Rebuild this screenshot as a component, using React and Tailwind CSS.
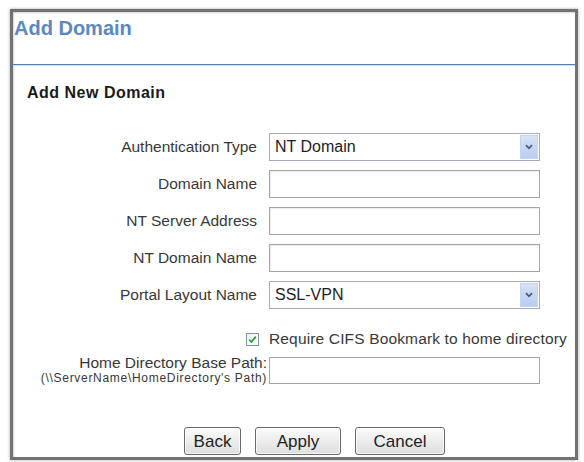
import React from 'react';

const font = { fontFamily: '"Liberation Sans", Arial, sans-serif' };

// Classic gray text box
const TextBox = () => (
  <div className="w-[271px] h-[28px] border border-[#a6a6a6] bg-white shadow-[inset_1px_1px_1px_rgba(0,0,0,0.08)]" />
);

// Dropdown with the light-blue arrow button on the right
const SelectBox = ({ value }) => (
  <div className="w-[271px] h-[28px] border border-[#a5acb5] bg-white flex items-center justify-between pl-[5px] pr-[1px]">
    <span className="text-[16px] leading-none text-[#1e1e1e]">{value}</span>
    <div className="w-[18px] h-[24px] bg-gradient-to-b from-[#d7e3f5] to-[#b9cdee] border border-[#c6d5ee] flex items-center justify-center">
      <svg width="8" height="6" viewBox="0 0 8 6">
        <path d="M1 1.2 L4 4.3 L7 1.2" fill="none" stroke="#4a5b82" strokeWidth="1.8" />
      </svg>
    </div>
  </div>
);

const Row = ({ label, children }) => (
  <div className="flex items-center h-[28px]">
    <div className="w-[244px] text-right text-[15.5px] text-[#383838] whitespace-nowrap">{label}</div>
    <div className="ml-[12px]">{children}</div>
  </div>
);

const Button = ({ children, w }) => (
  <button
    className={`h-[28px] ${w} border border-[#6a6a6a] rounded-[3px] bg-gradient-to-b from-[#fbfbfb] to-[#dedede] text-[17px] text-[#222] leading-none shadow-[inset_0_0_0_1px_rgba(255,255,255,0.7)]`}
  >
    {children}
  </button>
);

export default function App() {
  return (
    <div className="min-h-screen bg-white pl-[10px] pt-[9px]" style={font}>
      <div className="w-[568px] h-[451px] border-[3px] border-[#727272] bg-white flex flex-col shadow-[0_0_3px_rgba(0,0,0,0.35),inset_1px_1px_2px_rgba(0,0,0,0.18)]">
        {/* page header */}
        <div className="h-[52px] pt-[4px] pl-[1px]">
          <h1 className="text-[20px] leading-[24px] font-bold text-[#5b89bf]">Add Domain</h1>
        </div>
        <div className="h-[1px] bg-[#4f7db3]" />
        <div className="h-[1px] bg-[#d3e3f3]" />

        <h2 className="mt-[17px] pl-[14px] text-[16px] leading-[20px] font-bold tracking-[0.5px] text-[#1a1a1a]">
          Add New Domain
        </h2>

        {/* form */}
        <div className="mt-[30px] flex flex-col gap-[9px]">
          <Row label="Authentication Type">
            <SelectBox value="NT Domain" />
          </Row>
          <Row label="Domain Name">
            <TextBox />
          </Row>
          <Row label="NT Server Address">
            <TextBox />
          </Row>
          <Row label="NT Domain Name">
            <TextBox />
          </Row>
          <Row label="Portal Layout Name">
            <SelectBox value="SSL-VPN" />
          </Row>
        </div>

        <div className="mt-[20px] h-[20px] flex items-center">
          <div className="w-[244px] flex justify-end">
            <div className="w-[13px] h-[13px] border border-[#8094a8] bg-gradient-to-br from-[#eef2f6] to-white flex items-center justify-center mr-[-2px]">
              <svg width="9" height="9" viewBox="0 0 9 9">
                <path d="M1.2 4.6 L3.5 7 L7.8 1.6" fill="none" stroke="#2f9a2f" strokeWidth="1.8" />
              </svg>
            </div>
          </div>
          <span className="ml-[12px] text-[15.5px] text-[#383838] whitespace-nowrap tracking-[0.15px]">
            Require CIFS Bookmark to home directory
          </span>
        </div>

        <div className="mt-[6px] flex items-start">
          <div className="w-[254px] text-right text-[#383838] whitespace-nowrap">
            <div className="text-[15.5px] leading-[16px]">Home Directory Base Path:</div>
            <div className="text-[12px] leading-[14px] tracking-[0.7px]">(\\ServerName\HomeDirectory's Path)</div>
          </div>
          <div className="ml-[2px] pt-[2px]">
            <div className="w-[271px] h-[27px] border border-[#a6a6a6] bg-white" />
          </div>
        </div>

        {/* actions */}
        <div className="mt-[42px] pl-[171px] flex gap-[14px]">
          <Button w="w-[57px]">Back</Button>
          <Button w="w-[86px]">Apply</Button>
          <Button w="w-[90px]">Cancel</Button>
        </div>
      </div>
    </div>
  );
}
